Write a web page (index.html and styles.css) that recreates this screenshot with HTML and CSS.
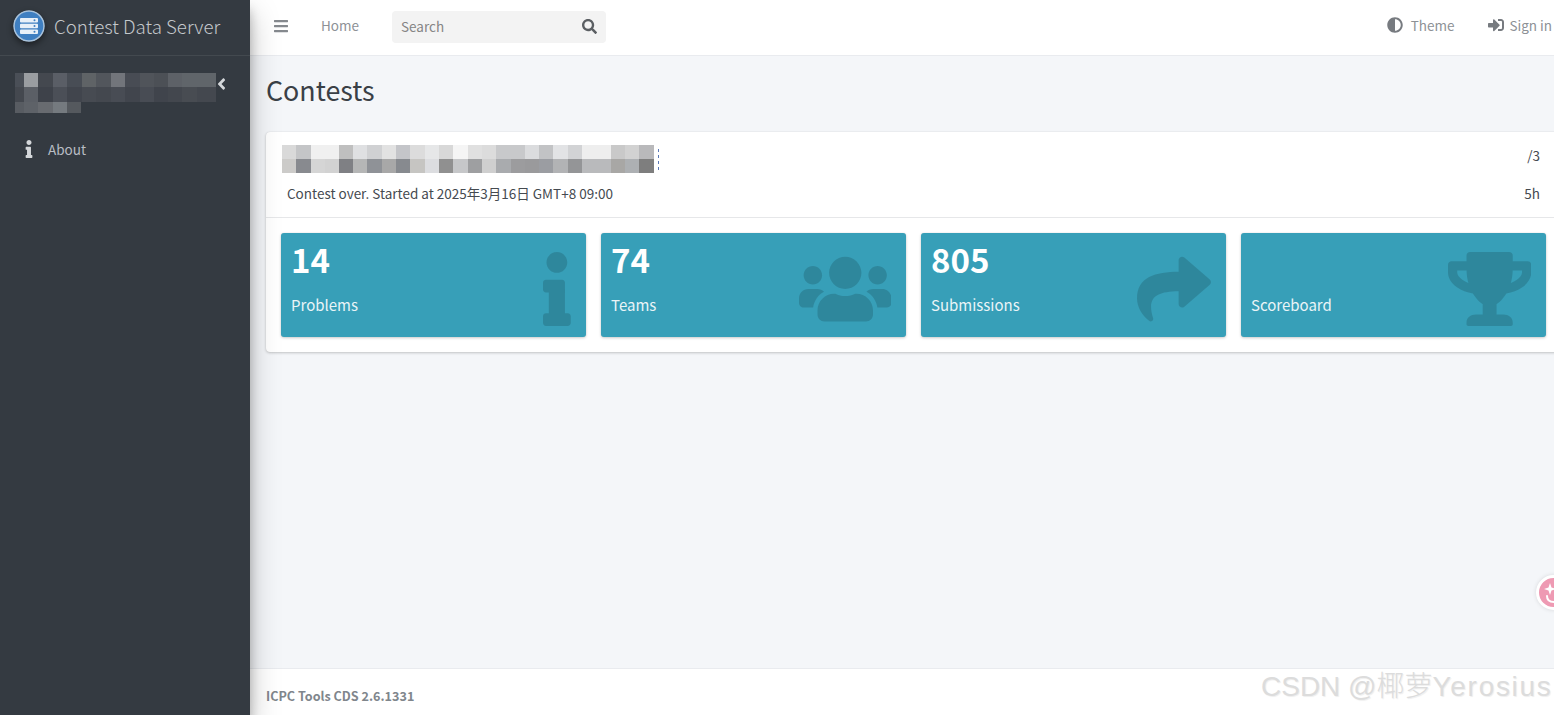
FILE: index.html
```html
<!DOCTYPE html>
<html lang="en">
<head>
    <meta charset="UTF-8">
    <meta name="viewport" content="width=device-width, initial-scale=1.0">
    <title>Contest Data Server</title>
    <link rel="stylesheet" href="styles.css">
</head>
<body>
    <aside class="sidebar">
        <div class="brand">
            <svg class="brand-logo" viewBox="0 0 32 32">
                <circle cx="16" cy="16" r="15" fill="#3f7fc1" stroke="#a9c3dc" stroke-width="1.5"/>
                <rect x="7" y="8" width="18" height="4.6" rx="1" fill="#e8f0f8"/>
                <rect x="7" y="13.7" width="18" height="4.6" rx="1" fill="#e8f0f8"/>
                <rect x="7" y="19.4" width="18" height="4.6" rx="1" fill="#e8f0f8"/>
                <circle cx="21.5" cy="10.3" r="1" fill="#3f7fc1"/>
                <circle cx="21.5" cy="16" r="1" fill="#3f7fc1"/>
                <circle cx="21.5" cy="21.7" r="1" fill="#3f7fc1"/>
            </svg>
            <span class="brand-text">Contest Data Server</span>
        </div>
        <div class="side-contest">
            <svg class="side-mosaic" width="201" height="42" viewBox="0 0 201 42">
                <rect x="0" y="0" width="9" height="14" fill="#4a4f57"/>
                <rect x="9" y="0" width="14" height="14" fill="#9a9da1"/>
                <rect x="23" y="0" width="15" height="14" fill="#44484f"/>
                <rect x="38" y="0" width="14" height="14" fill="#5a5e66"/>
                <rect x="52" y="0" width="15" height="14" fill="#484d55"/>
                <rect x="67" y="0" width="14" height="14" fill="#5f6366"/>
                <rect x="81" y="0" width="15" height="14" fill="#52565c"/>
                <rect x="96" y="0" width="14" height="14" fill="#72757b"/>
                <rect x="110" y="0" width="15" height="14" fill="#484c54"/>
                <rect x="125" y="0" width="14" height="14" fill="#50545a"/>
                <rect x="139" y="0" width="14" height="14" fill="#4c5056"/>
                <rect x="153" y="0" width="14" height="14" fill="#5d6167"/>
                <rect x="167" y="0" width="34" height="14" fill="#60656a"/>
                <rect x="0" y="14" width="9" height="15" fill="#44484f"/>
                <rect x="9" y="14" width="14" height="15" fill="#5b5f66"/>
                <rect x="23" y="14" width="15" height="15" fill="#3e424a"/>
                <rect x="38" y="14" width="14" height="15" fill="#4b4f57"/>
                <rect x="52" y="14" width="15" height="15" fill="#41454d"/>
                <rect x="67" y="14" width="14" height="15" fill="#474b52"/>
                <rect x="81" y="14" width="15" height="15" fill="#44484f"/>
                <rect x="96" y="14" width="14" height="15" fill="#484c54"/>
                <rect x="110" y="14" width="15" height="15" fill="#41454d"/>
                <rect x="125" y="14" width="14" height="15" fill="#484c54"/>
                <rect x="139" y="14" width="14" height="15" fill="#40444c"/>
                <rect x="153" y="14" width="14" height="15" fill="#43474e"/>
                <rect x="167" y="14" width="15" height="15" fill="#484c52"/>
                <rect x="182" y="14" width="19" height="15" fill="#44484f"/>
                <rect x="0" y="29" width="9" height="11" fill="#585c62"/>
                <rect x="9" y="29" width="14" height="11" fill="#5e6268"/>
                <rect x="23" y="29" width="15" height="11" fill="#686b70"/>
                <rect x="38" y="29" width="14" height="11" fill="#757a7f"/>
                <rect x="52" y="29" width="14" height="11" fill="#55595e"/>
            </svg>
            <svg class="side-angle" viewBox="0 0 256 512"><path d="M31.7 239l136-136c9.4-9.4 24.6-9.4 33.9 0l22.6 22.6c9.4 9.4 9.4 24.6 0 33.9L127.9 256l96.4 96.4c9.4 9.4 9.4 24.6 0 33.9L201.7 409c-9.4 9.4-24.6 9.4-33.9 0l-136-136c-9.5-9.4-9.5-24.6-.1-34z"/></svg>
        </div>
        <a class="side-link" href="#">
            <svg class="side-icon" viewBox="0 0 192 512"><path d="M20 424.229h20V279.771H20c-11.046 0-20-8.954-20-20V212c0-11.046 8.954-20 20-20h112c11.046 0 20 8.954 20 20v212.229h20c11.046 0 20 8.954 20 20V492c0 11.046-8.954 20-20 20H20c-11.046 0-20-8.954-20-20v-47.771c0-11.046 8.954-20 20-20zM96 0C56.235 0 24 32.235 24 72s32.235 72 72 72 72-32.235 72-72S135.764 0 96 0z"/></svg>
            About
        </a>
    </aside>

    <div class="main">
        <nav class="topbar">
            <svg class="bars-icon" viewBox="0 0 448 512"><path d="M16 132h416c8.837 0 16-7.163 16-16V76c0-8.837-7.163-16-16-16H16C7.163 60 0 67.163 0 76v40c0 8.837 7.163 16 16 16zm0 160h416c8.837 0 16-7.163 16-16v-40c0-8.837-7.163-16-16-16H16c-8.837 0-16 7.163-16 16v40c0 8.837 7.163 16 16 16zm0 160h416c8.837 0 16-7.163 16-16v-40c0-8.837-7.163-16-16-16H16c-8.837 0-16 7.163-16 16v40c0 8.837 7.163 16 16 16z"/></svg>
            <a class="nav-link home-link" href="#">Home</a>
            <div class="search">
                <span class="search-text">Search</span>
                <svg class="search-icon" viewBox="0 0 512 512"><path d="M505 442.7L405.3 343c-4.5-4.5-10.6-7-17-7H372c27.6-35.3 44-79.7 44-128C416 93.1 322.9 0 208 0S0 93.1 0 208s93.1 208 208 208c48.3 0 92.7-16.4 128-44v16.3c0 6.4 2.5 12.5 7 17l99.7 99.7c9.4 9.4 24.6 9.4 33.9 0l28.3-28.3c9.4-9.4 9.4-24.6.1-34zM208 336c-70.7 0-128-57.2-128-128 0-70.7 57.2-128 128-128 70.7 0 128 57.2 128 128 0 70.7-57.2 128-128 128z"/></svg>
            </div>
            <div class="nav-right">
                <a class="nav-link" href="#">
                    <svg class="nav-icon theme-icon" viewBox="0 0 512 512"><path d="M8 256c0 136.966 111.033 248 248 248s248-111.034 248-248S392.966 8 256 8 8 119.033 8 256zm248 184V72c101.705 0 184 82.311 184 184 0 101.705-82.311 184-184 184z"/></svg>
                    Theme
                </a>
                <a class="nav-link" href="#">
                    <svg class="nav-icon" viewBox="0 0 512 512"><path d="M416 448h-84c-6.6 0-12-5.4-12-12v-40c0-6.6 5.4-12 12-12h84c17.7 0 32-14.3 32-32V160c0-17.7-14.3-32-32-32h-84c-6.6 0-12-5.4-12-12V76c0-6.6 5.4-12 12-12h84c53 0 96 43 96 96v192c0 53-43 96-96 96zm-47-201L201 79c-15-15-41-4.5-41 17v96H24c-13.3 0-24 10.7-24 24v96c0 13.3 10.7 24 24 24h136v96c0 21.5 26 32 41 17l168-168c9.3-9.4 9.3-24.6 0-34z"/></svg>
                    Sign in
                </a>
            </div>
        </nav>

        <main class="content">
            <h1>Contests</h1>
            <section class="card">
                <div class="card-head">
                    <div class="card-row title-row">
                        <svg class="title-mosaic" width="378" height="28" viewBox="0 0 378 28">
                            <rect x="0" y="0" width="14" height="14" fill="#d9d9d9"/>
                            <rect x="14" y="0" width="15" height="14" fill="#c4c5c7"/>
                            <rect x="29" y="0" width="28" height="14" fill="#f0f0f0"/>
                            <rect x="57" y="0" width="14" height="14" fill="#bfbfbf"/>
                            <rect x="71" y="0" width="14" height="14" fill="#dfe0e2"/>
                            <rect x="85" y="0" width="15" height="14" fill="#d0d1d3"/>
                            <rect x="100" y="0" width="14" height="14" fill="#e2e2e2"/>
                            <rect x="114" y="0" width="14" height="14" fill="#c4c5c9"/>
                            <rect x="128" y="0" width="15" height="14" fill="#dcdcdc"/>
                            <rect x="143" y="0" width="14" height="14" fill="#e6e7e8"/>
                            <rect x="157" y="0" width="14" height="14" fill="#d8d8d8"/>
                            <rect x="171" y="0" width="15" height="14" fill="#f5f5f5"/>
                            <rect x="186" y="0" width="14" height="14" fill="#e0e0e0"/>
                            <rect x="200" y="0" width="14" height="14" fill="#dcdcdc"/>
                            <rect x="214" y="0" width="29" height="14" fill="#c8c9cb"/>
                            <rect x="243" y="0" width="14" height="14" fill="#dbdcde"/>
                            <rect x="257" y="0" width="14" height="14" fill="#c2c3c5"/>
                            <rect x="271" y="0" width="15" height="14" fill="#e2e3e5"/>
                            <rect x="286" y="0" width="14" height="14" fill="#d2d3d5"/>
                            <rect x="300" y="0" width="29" height="14" fill="#eeeeee"/>
                            <rect x="329" y="0" width="14" height="14" fill="#c9c9c9"/>
                            <rect x="343" y="0" width="14" height="14" fill="#d2d2d2"/>
                            <rect x="357" y="0" width="15" height="14" fill="#b9b9bb"/>
                            <rect x="0" y="14" width="14" height="14" fill="#cccbc9"/>
                            <rect x="14" y="14" width="15" height="14" fill="#888a8f"/>
                            <rect x="29" y="14" width="14" height="14" fill="#d5d5d5"/>
                            <rect x="43" y="14" width="14" height="14" fill="#d2d2d2"/>
                            <rect x="57" y="14" width="14" height="14" fill="#7f8084"/>
                            <rect x="71" y="14" width="14" height="14" fill="#b5b6b6"/>
                            <rect x="85" y="14" width="15" height="14" fill="#8f9297"/>
                            <rect x="100" y="14" width="14" height="14" fill="#a8a8a8"/>
                            <rect x="114" y="14" width="14" height="14" fill="#878a8f"/>
                            <rect x="128" y="14" width="15" height="14" fill="#c6c5c2"/>
                            <rect x="143" y="14" width="14" height="14" fill="#dcdde0"/>
                            <rect x="157" y="14" width="14" height="14" fill="#909090"/>
                            <rect x="171" y="14" width="15" height="14" fill="#c6c7c9"/>
                            <rect x="186" y="14" width="14" height="14" fill="#9e9fa1"/>
                            <rect x="200" y="14" width="14" height="14" fill="#cfcfcf"/>
                            <rect x="214" y="14" width="15" height="14" fill="#a9abae"/>
                            <rect x="229" y="14" width="14" height="14" fill="#9c9c9e"/>
                            <rect x="243" y="14" width="14" height="14" fill="#9a9a9c"/>
                            <rect x="257" y="14" width="14" height="14" fill="#9b9da2"/>
                            <rect x="271" y="14" width="15" height="14" fill="#b2b3b5"/>
                            <rect x="286" y="14" width="14" height="14" fill="#949597"/>
                            <rect x="300" y="14" width="29" height="14" fill="#b9babc"/>
                            <rect x="329" y="14" width="14" height="14" fill="#a8a7a5"/>
                            <rect x="343" y="14" width="14" height="14" fill="#adb0b3"/>
                            <rect x="357" y="14" width="15" height="14" fill="#7e7e7e"/>
                            <line x1="376.5" y1="4" x2="376.5" y2="28" stroke="#5a78b5" stroke-width="1" stroke-dasharray="3 3"/>
                        </svg>
                        <span>/3</span>
                    </div>
                    <div class="card-row">
                        <span>Contest over. Started at 2025年3月16日 GMT+8 09:00</span>
                        <span>5h</span>
                    </div>
                </div>
                <div class="tiles">
                    <a class="tile" href="#">
                        <div class="tile-num">14</div>
                        <div class="tile-label">Problems</div>
                        <svg class="tile-icon" viewBox="0 0 192 512"><path d="M20 424.229h20V279.771H20c-11.046 0-20-8.954-20-20V212c0-11.046 8.954-20 20-20h112c11.046 0 20 8.954 20 20v212.229h20c11.046 0 20 8.954 20 20V492c0 11.046-8.954 20-20 20H20c-11.046 0-20-8.954-20-20v-47.771c0-11.046 8.954-20 20-20zM96 0C56.235 0 24 32.235 24 72s32.235 72 72 72 72-32.235 72-72S135.764 0 96 0z"/></svg>
                    </a>
                    <a class="tile" href="#">
                        <div class="tile-num">74</div>
                        <div class="tile-label">Teams</div>
                        <svg class="tile-icon" viewBox="0 0 640 512"><path d="M96 224c35.3 0 64-28.7 64-64s-28.7-64-64-64-64 28.7-64 64 28.7 64 64 64zm448 0c35.3 0 64-28.7 64-64s-28.7-64-64-64-64 28.7-64 64 28.7 64 64 64zm32 32h-64c-17.6 0-33.5 7.1-45.1 18.6 40.3 22.1 68.9 62 75.1 109.4h66c17.7 0 32-14.3 32-32v-32c0-35.3-28.7-64-64-64zm-256 0c61.9 0 112-50.1 112-112S381.9 32 320 32 208 82.1 208 144s50.1 112 112 112zm76.8 32h-8.3c-20.8 10-43.9 16-68.5 16s-47.6-6-68.5-16h-8.3C179.6 288 128 339.6 128 403.2V432c0 26.5 21.5 48 48 48h288c26.5 0 48-21.5 48-48v-28.8c0-63.6-51.6-115.2-115.2-115.2zm-223.7-13.4C161.5 263.1 145.6 256 128 256H64c-35.3 0-64 28.7-64 64v32c0 17.7 14.3 32 32 32h65.9c6.3-47.4 34.9-87.3 75.2-109.4z"/></svg>
                    </a>
                    <a class="tile" href="#">
                        <div class="tile-num">805</div>
                        <div class="tile-label">Submissions</div>
                        <svg class="tile-icon" viewBox="0 0 512 512"><path d="M503.691 189.836L327.687 37.851C312.281 24.546 288 35.347 288 56.015v80.053C127.371 137.907 0 170.1 0 322.326c0 61.441 39.581 122.309 83.333 154.132 13.653 9.931 33.111-2.533 28.077-18.631C66.066 312.814 132.917 274.316 288 272.085V360c0 20.7 24.3 31.453 39.687 18.164l176.004-152c11.071-9.562 11.086-26.753 0-36.328z"/></svg>
                    </a>
                    <a class="tile" href="#">
                        <div class="tile-num">&nbsp;</div>
                        <div class="tile-label">Scoreboard</div>
                        <svg class="tile-icon" viewBox="0 0 576 512"><path d="M552 64H448V24c0-13.3-10.7-24-24-24H152c-13.3 0-24 10.7-24 24v40H24C10.7 64 0 74.7 0 88v56c0 35.7 22.5 72.4 61.9 100.7 31.5 22.7 69.8 37.1 110 41.7C203.3 338.5 240 360 240 360v72h-48c-35.3 0-64 20.7-64 56v12c0 6.6 5.4 12 12 12h296c6.6 0 12-5.4 12-12v-12c0-35.3-28.7-56-64-56h-48v-72s36.7-21.5 68.1-73.6c40.3-4.6 78.6-19 110-41.7 39.3-28.3 61.9-65 61.9-100.7V88c0-13.3-10.7-24-24-24zM99.3 192.8C74.9 175.2 64 155.6 64 144v-16h64.2c1 32.6 5.8 61.2 12.8 86.2-15.1-5.2-29.2-12.4-41.7-21.4zM512 144c0 16.1-17.7 36.1-35.3 48.8-12.5 9-26.7 16.2-41.8 21.4 7-25 11.8-53.6 12.8-86.2H512v16z"/></svg>
                    </a>
                </div>
            </section>
        </main>

        <footer class="footer">ICPC Tools CDS 2.6.1331</footer>
    </div>

    <div class="float-btn">
        <svg viewBox="0 0 29 29" width="29" height="29">
            <path d="M11 5l1.5 4.5 4.5 1.5-4.5 1.5-1.5 4.5-1.5-4.5-4.5-1.5 4.5-1.5z" fill="#fff"/>
            <path d="M8 18c0 4 3 6 7 6" fill="none" stroke="#fff" stroke-width="2" stroke-linecap="round"/>
        </svg>
    </div>
    <div class="watermark">CSDN @椰萝<span class="watermark-name">Yerosius</span></div>
</body>
</html>
```
FILE: styles.css
```css
* {
    margin: 0;
    padding: 0;
    box-sizing: border-box;
}

body {
    font-family: "Noto Sans CJK SC", "Noto Sans", sans-serif;
    font-size: 13.5px;
    color: #343a40;
    background: #f4f6f9;
    height: 100vh;
    display: flex;
    overflow: hidden;
    position: relative;
}

a {
    color: inherit;
    text-decoration: none;
}

/* sidebar */
.sidebar {
    width: 250px;
    flex-shrink: 0;
    background: #343a41;
    color: #c2c7d0;
    box-shadow: 0 14px 28px rgba(0, 0, 0, 0.25), 0 10px 10px rgba(0, 0, 0, 0.22);
    z-index: 2;
}

.brand {
    height: 56px;
    display: flex;
    align-items: center;
    padding: 0 0 4px 13px;
    border-bottom: 1px solid #43494f;
}

.brand-logo {
    width: 32px;
    height: 32px;
    flex-shrink: 0;
    border-radius: 50%;
    box-shadow: 0 3px 6px rgba(0, 0, 0, 0.45);
}

.brand-text {
    margin-left: 9px;
    font-size: 18.7px;
    font-weight: 300;
    color: #c4c8cc;
}

.side-contest {
    display: flex;
    align-items: flex-start;
    padding: 17px 0 0 15px;
    height: 81px;
}

.side-angle {
    width: 9px;
    height: 18px;
    margin: 2px 0 0 1px;
    fill: #d4d7da;
}

.side-link {
    display: flex;
    align-items: center;
    height: 24px;
    padding-left: 25px;
    color: #b9bdc4;
}

.side-icon {
    width: 8px;
    height: 18px;
    margin-right: 15px;
    fill: #d4d7da;
}

/* top bar */
.main {
    flex: 1;
    min-width: 0;
    display: flex;
    flex-direction: column;
}

.topbar {
    height: 56px;
    flex-shrink: 0;
    background: #fff;
    border-bottom: 1px solid #e9ebef;
    display: flex;
    align-items: center;
    padding: 0 2px 4px 24px;
    color: #8d9196;
}

.bars-icon {
    width: 14px;
    height: 16px;
    fill: #85898e;
}

.nav-link {
    display: flex;
    align-items: center;
    margin-bottom: 2px;
    white-space: nowrap;
}

.home-link {
    margin-left: 33px;
}

.search {
    width: 214px;
    height: 32px;
    margin: 2px 0 0 33px;
    padding: 0 9px;
    background: #f3f3f3;
    border-radius: 4px;
    display: flex;
    align-items: center;
    justify-content: space-between;
    color: #858585;
}

.search-text {
    margin-bottom: 2px;
}

.search-icon {
    width: 15px;
    height: 15px;
    fill: #5b5f63;
}

.nav-right {
    margin-left: auto;
    display: flex;
    gap: 34px;
}

.nav-icon {
    width: 16px;
    height: 16px;
    margin-right: 5px;
    fill: #777b80;
}

.theme-icon {
    margin-right: 8px;
}

/* content */
.content {
    flex: 1;
    padding: 16px 16px 0;
}

h1 {
    font-size: 26.8px;
    font-weight: 400;
    line-height: 36px;
    color: #3a4046;
    margin-bottom: 24px;
}

.card {
    width: 1295px;
    height: 220px;
    background: #fff;
    border-radius: 4px;
    box-shadow: 0 0 1px rgba(0, 0, 0, 0.13), 0 1px 3px rgba(0, 0, 0, 0.2);
}

.card-head {
    height: 86px;
    padding: 13px 21px 0 16px;
    border-bottom: 1px solid #e6e7e9;
}

.card-row {
    display: flex;
    justify-content: space-between;
    align-items: center;
    padding-left: 5px;
    color: #454a50;
    height: 20px;
    margin-top: 10px;
}

.title-row {
    height: 28px;
    margin-top: 0;
    padding-left: 0;
    align-items: flex-start;
}

.tiles {
    display: grid;
    grid-template-columns: repeat(4, 1fr);
    gap: 15px;
    padding: 15px;
}

.tile {
    position: relative;
    height: 104px;
    padding: 8px 10px;
    background: #379fb8;
    border-radius: 3px;
    color: #fff;
    box-shadow: 0 0 1px rgba(0, 0, 0, 0.13), 0 1px 3px rgba(0, 0, 0, 0.2);
}

.tile-num {
    font-size: 33px;
    font-weight: 700;
    line-height: 36px;
}

.tile-label {
    margin-top: 17px;
    font-size: 15px;
    line-height: 22px;
    color: #eaf4f7;
}

.tile-icon {
    position: absolute;
    top: 19px;
    right: 15px;
    height: 74px;
    fill: rgba(0, 0, 0, 0.15);
}

.footer {
    height: 47px;
    flex-shrink: 0;
    background: #fff;
    border-top: 1px solid #e9ebef;
    padding: 17px 16px 0;
    font-size: 12.6px;
    font-weight: 700;
    color: #80868c;
}

/* overlays */
.float-btn {
    position: absolute;
    left: 1536px;
    top: 575px;
    width: 35px;
    height: 35px;
    border-radius: 50%;
    background: #ee9ab3;
    border: 3px solid #fff;
    box-shadow: 0 0 4px rgba(0, 0, 0, 0.12);
}

.float-btn svg {
    display: block;
}

.watermark {
    position: absolute;
    left: 1261px;
    top: 668px;
    font-family: "Liberation Sans", "Noto Sans CJK SC", sans-serif;
    font-size: 28px;
    font-weight: 300;
    line-height: 38px;
    white-space: nowrap;
    color: #dcdcdc;
    text-shadow: 1px 1px 1px rgba(0, 0, 0, 0.07);
}

.watermark-name {
    letter-spacing: 1.7px;
}
```
